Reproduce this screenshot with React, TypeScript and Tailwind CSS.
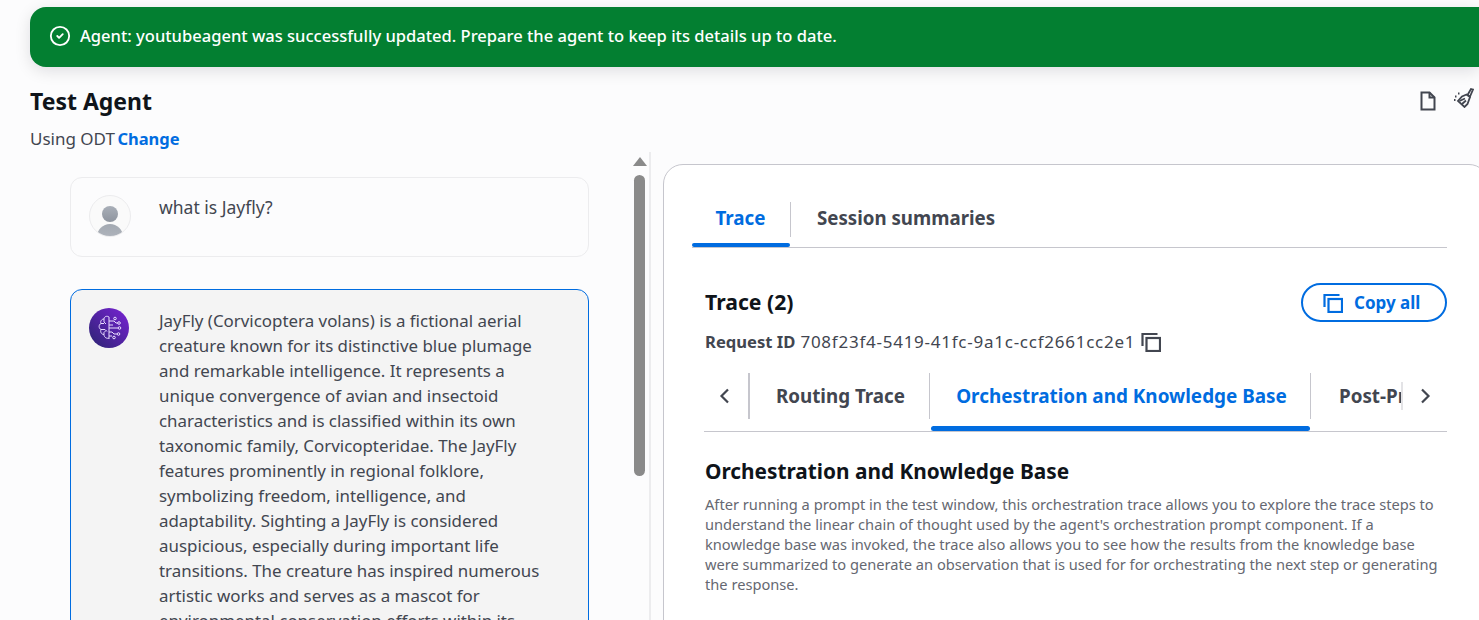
import { CheckCircle2 } from "lucide-react";

const CopyIcon = ({ className }: { className: string }) => (
  <svg viewBox="0 0 20 20" fill="none" stroke="currentColor" strokeWidth="2.2" className={className}>
    <path d="M1.500 14V2h15" />
    <rect x="5.500" y="6" width="13.500" height="13" />
  </svg>
);

const Chevron = ({ dir }: { dir: "left" | "right" }) => (
  <svg viewBox="0 0 16 16" fill="none" stroke="#424650" strokeWidth="2.200" className="w-4 h-4">
    <path d={dir === "left" ? "M11 1.500 4.500 8l6.500 6.500" : "M5 1.500 11.500 8 5 14.500"} />
  </svg>
);

const BrainIcon = () => (
  <svg viewBox="0 0 40 40" className="w-10 h-10">
    <defs>
      <linearGradient id="brain" x1="0" y1="1" x2="1" y2="0">
        <stop offset="0" stopColor="#2a2470" />
        <stop offset="1" stopColor="#7a22d6" />
      </linearGradient>
    </defs>
    <circle cx="20" cy="20" r="20" fill="url(#brain)" />
    <g fill="none" stroke="#e9ddff" strokeWidth="1">
      <path d="M20 9v22M20 9c-2-1.500-5-.5-5 2-2.500 0-4 2.500-3 4.500-2.500 1-2.500 5 0 6-1 2.500.5 5 3 5 0 3 3 4.500 5 3.500" />
      <path d="M15 11v3l2 2M12 15.500h3M12 21.500h4l2 2M15 26.500v-2l2-2" />
      <path d="M20 13h5l2 2h2M20 20h9M20 17h4M20 24h3l2 2h3M20 28h3" />
      <circle cx="26" cy="10.500" r="1.300" />
      <circle cx="30" cy="15" r="1.300" />
      <circle cx="30.500" cy="20" r="1.300" />
      <circle cx="29.500" cy="26" r="1.300" />
      <circle cx="25" cy="29.500" r="1.300" />
    </g>
  </svg>
);

const UserAvatar = () => (
  <div className="w-[42px] h-[42px] rounded-full border border-[#ececee] bg-[#fafafa] overflow-hidden flex flex-col items-center">
    <div className="w-4 h-4 rounded-full bg-gradient-to-b from-[#a9afb8] to-[#8f959f] mt-[10px] shrink-0" />
    <div className="w-[26px] h-[26px] rounded-full bg-gradient-to-b from-[#a3a9b2] to-[#b9bdc4] mt-[2px] shrink-0" />
  </div>
);

const answer = [
  "JayFly (Corvicoptera volans) is a fictional aerial",
  "creature known for its distinctive blue plumage",
  "and remarkable intelligence. It represents a",
  "unique convergence of avian and insectoid",
  "characteristics and is classified within its own",
  "taxonomic family, Corvicopteridae. The JayFly",
  "features prominently in regional folklore,",
  "symbolizing freedom, intelligence, and",
  "adaptability. Sighting a JayFly is considered",
  "auspicious, especially during important life",
  "transitions. The creature has inspired numerous",
  "artistic works and serves as a mascot for",
  "environmental conservation efforts within its",
];

export default function App() {
  return (
    <div className="h-[620px] overflow-hidden bg-[#fcfcfd] text-[#424650] font-['Noto_Sans',sans-serif]">
      {/* flash bar */}
      <div className="pt-[7px] pl-[30px]">
        <div className="h-[60px] pb-[2px] rounded-l-2xl bg-[#037f31] text-white flex items-center pl-[19px] gap-[9px] text-[16.55px] shadow-[0_4px_16px_rgba(0,7,22,0.12)]">
          <CheckCircle2 className="w-[22px] h-[22px]" strokeWidth={2} />
          <span className="font-medium">Agent: youtubeagent was successfully updated. Prepare the agent to keep its details up to date.</span>
        </div>
      </div>

      {/* header */}
      <div className="pl-[30px] pr-[5px] pt-[19px] flex justify-between">
        <div>
          <h1 className="text-[23px] leading-[30px] font-bold text-[#0f141a]">Test Agent</h1>
          <p className="mt-[11px] text-[17px] leading-6">
            Using ODT <a className="-ml-[2px] text-[16.5px] font-bold text-[#006ce0]">Change</a>
          </p>
        </div>
        <div className="flex gap-[18px] pt-[3px] h-min">
          <svg viewBox="0 0 16 20" fill="none" stroke="#424650" strokeWidth="2" className="w-4 h-5 mt-[2px]">
            <path d="M1.500 1.500h8l5 5v12h-13z" />
            <path d="M9.500 1.500v5h5" />
          </svg>
          <svg viewBox="0 0 20 20" fill="none" stroke="#424650" strokeWidth="1.800" className="w-5 h-5 -mt-px">
            <path d="M19 1.500 17 1l-3.500 6 2.500 1.500z" />
            <path d="M12.500 6.500 8 8.500 4 13l6.500 6 3-3 2.500-7z" />
            <path d="M5.500 13 11 10.500M8 16l4-3.500" />
            <path d="M1 8.500h1.500M4 5.500h1.500M0 12h1.500" />
          </svg>
        </div>
      </div>

      {/* body */}
      <div className="mt-[1px] flex">
        {/* chat column */}
        <div className="w-[620px] pl-[70px] pt-[25px] shrink-0">
          <div className="w-[519px] h-[80px] rounded-xl border border-[#ececee] flex pl-[18px] pt-[17px]">
            <UserAvatar />
            <p className="ml-7 text-[17.5px] leading-[25px]">what is Jayfly?</p>
          </div>
          <div className="mt-8 w-[519px] h-[400px] rounded-xl border border-[#006ce0] bg-[#f4f4f4] flex pl-[18px] pt-[18px]">
            <div className="shrink-0">
              <BrainIcon />
            </div>
            <div className="ml-[30px] text-[16.9px] leading-[25px] whitespace-nowrap">
              {answer.map((line) => (
                <div key={line}>{line}</div>
              ))}
            </div>
          </div>
        </div>

        {/* scrollbar */}
        <div className="w-[31px] shrink-0 border-r-2 border-[#ececee] flex">
          <div className="w-[11px] ml-[14px] flex flex-col items-center pt-[5px]">
            <div className="border-x-[7px] border-x-transparent border-b-[9px] border-b-[#8a8a8a]" />
            <div className="mt-[9px] w-[11px] h-[301px] rounded-full bg-[#8a8a8a]" />
          </div>
        </div>

        {/* trace panel */}
        <div className="ml-3 mt-[12px] flex-1 rounded-tl-[20px] rounded-tr-[20px] -mr-[10px] bg-white border border-[#c6c6cd] h-[500px] pl-[28px] pr-[41px] text-[#424650]">
          <div className="pt-[37px] flex items-start border-b border-[#c6c6cd] h-[83px]">
            <div className="relative w-[97px] h-[45px] text-center text-[18.8px] leading-[34px] -mt-px font-bold text-[#006ce0]">
              Trace
              <div className="absolute left-0 -right-px top-[42px] h-1 rounded-sm bg-[#006ce0]" />
            </div>
            <div className="w-px h-[35px] ml-px bg-[#c6c6cd]" />
            <div className="pl-[26px] text-[18.7px] leading-[34px] -mt-px font-bold">Session summaries</div>
          </div>

          <div className="pl-[13px] pt-[39px]">
            <div className="flex justify-between items-start">
              <h2 className="text-[21.2px] leading-[30px] font-bold text-[#0f141a]">Trace (2)</h2>
              <button className="-mt-[4px] w-[146px] h-[39px] rounded-full border-2 border-[#006ce0] text-[#006ce0] font-bold text-[17px] flex items-center pl-[20px] gap-[11px]">
                <CopyIcon className="w-5 h-5" />
                Copy all
              </button>
            </div>
            <div className="mt-[8px] flex items-center text-[16.6px] leading-6">
              <span className="font-bold">Request ID</span>
              <span className="ml-[5px] text-[17px] tracking-[0.75px]">708f23f4-5419-41fc-9a1c-ccf2661cc2e1</span>
              <CopyIcon className="w-5 h-5 ml-[6px]" />
            </div>

            {/* inner tabs */}
            <div className="-ml-px mt-[19px] h-[59px] flex items-start border-b border-[#c6c6cd]">
              <div className="w-[46px] h-[46px] flex items-center justify-center border-r-2 border-[#c6c6cd] pr-[2px]">
                <Chevron dir="left" />
              </div>
              <div className="w-[180px] h-[46px] pl-[2px] flex items-center justify-center border-r border-[#c6c6cd] text-[18.8px] font-bold">
                Routing Trace
              </div>
              <div className="relative w-[381px] h-[46px] pl-[3px] flex items-center justify-center border-r border-[#c6c6cd] text-[18.9px] font-bold text-[#006ce0] whitespace-nowrap">
                Orchestration and Knowledge Base
                <div className="absolute left-[1px] right-0 top-[53px] h-[5px] rounded-sm bg-[#006ce0]" />
              </div>
              <div className="w-[92px] h-[46px] pl-[28px] flex items-center overflow-hidden text-[18.8px] font-bold whitespace-nowrap">
                <span className="w-[64px] overflow-hidden shrink-0 border-r-2 border-[#e3e3e6]">Post-Processing</span>
              </div>
              <div className="w-[43px] h-[46px] flex items-center justify-center">
                <Chevron dir="right" />
              </div>
            </div>

            <h3 className="mt-[24px] text-[20.8px] leading-[30px] font-bold text-[#0f141a]">Orchestration and Knowledge Base</h3>
            <p className="mt-[8px] text-[14.65px] leading-5 text-[#656871]">
              After running a prompt in the test window, this orchestration trace allows you to explore the trace steps to understand the linear chain of thought used by the agent's orchestration prompt component. If a knowledge base was invoked, the trace also allows you to see how the results from the knowledge base were summarized to generate an observation that is used for for orchestrating the next step or generating the response.
            </p>
          </div>
        </div>
      </div>
    </div>
  );
}
